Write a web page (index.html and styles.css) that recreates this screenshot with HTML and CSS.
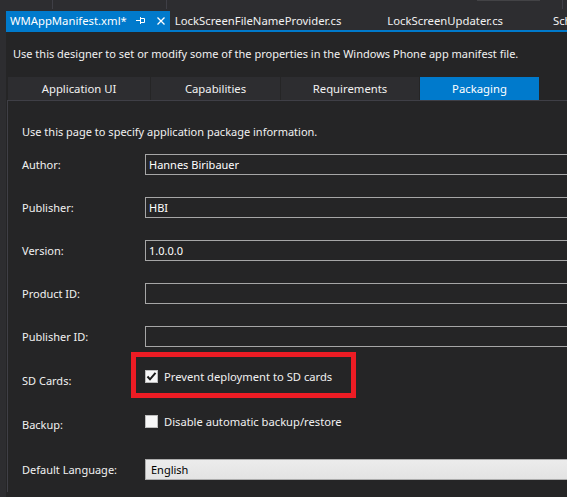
FILE: index.html
```html
<!DOCTYPE html>
<html lang="en">
<head>
    <meta charset="UTF-8">
    <meta name="viewport" content="width=device-width, initial-scale=1.0">
    <title>WMAppManifest.xml</title>
    <link rel="stylesheet" href="styles.css">
</head>
<body>
    <div class="toolbar">
        <span class="tb-sep first"></span>
        <span class="tb-sep second"></span>
        <span class="tb-box"></span>
        <span class="tb-sep last"></span>
    </div>

    <div class="doc-tabs">
        <div class="doc-tab active">
            <span class="doc-title">WMAppManifest.xml*</span>
            <svg class="pin" width="9" height="8" viewBox="0 0 9 8">
                <path d="M0 3.5H4.5M4.5 0V7M4.5 1.5H8.5V5.5H4.5" fill="none" stroke="#fff" stroke-width="1"/>
            </svg>
            <svg class="close" width="8" height="8" viewBox="0 0 8 8">
                <path d="M0.5 0.5L7.5 7.5M7.5 0.5L0.5 7.5" fill="none" stroke="#fff" stroke-width="1.3"/>
            </svg>
        </div>
        <div class="doc-tab">
            <span class="doc-title">LockScreenFileNameProvider.cs</span>
            <span class="tab-space"></span>
        </div>
        <div class="doc-tab">
            <span class="doc-title">LockScreenUpdater.cs</span>
            <span class="tab-space wide"></span>
        </div>
        <div class="doc-tab">
            <span class="doc-title">Sch</span>
        </div>
    </div>

    <div class="editor">
        <p class="intro">Use this designer to set or modify some of the properties in the Windows Phone app manifest file.</p>

        <div class="designer">
            <div class="designer-tabs">
                <div class="designer-tab app-ui">Application UI</div>
                <div class="designer-tab caps">Capabilities</div>
                <div class="designer-tab reqs">Requirements</div>
                <div class="designer-tab packaging selected">Packaging</div>
            </div>

            <div class="panel">
                <p class="panel-intro">Use this page to specify application package information.</p>

                <div class="field-row">
                    <label>Author:</label>
                    <div class="textbox">Hannes Biribauer</div>
                </div>
                <div class="field-row">
                    <label>Publisher:</label>
                    <div class="textbox">HBI</div>
                </div>
                <div class="field-row">
                    <label>Version:</label>
                    <div class="textbox">1.0.0.0</div>
                </div>
                <div class="field-row">
                    <label>Product ID:</label>
                    <div class="textbox"></div>
                </div>
                <div class="field-row">
                    <label>Publisher ID:</label>
                    <div class="textbox"></div>
                </div>
                <div class="field-row check-row sd-row">
                    <label>SD Cards:</label>
                    <div class="check-field">
                        <span class="checkbox">
                            <svg width="11" height="11" viewBox="0 0 11 11">
                                <path d="M1.5 5.5L4 8.3L9.5 1.8" fill="none" stroke="#1b1b1b" stroke-width="2"/>
                            </svg>
                        </span>
                        <span>Prevent deployment to SD cards</span>
                    </div>
                    <div class="highlight"></div>
                </div>
                <div class="field-row check-row backup-row">
                    <label>Backup:</label>
                    <div class="check-field">
                        <span class="checkbox"></span>
                        <span>Disable automatic backup/restore</span>
                    </div>
                </div>
                <div class="field-row lang-row">
                    <label>Default Language:</label>
                    <div class="dropdown">English</div>
                </div>
            </div>
        </div>
    </div>
</body>
</html>
```

FILE: styles.css
```css
body {
    margin: 0;
    padding: 0;
    background-color: #2d2d30;
    color: #f1f1f1;
    font-family: "Noto Sans", "Open Sans", sans-serif;
    font-size: 11px;
    line-height: 16px;
    width: 567px;
    height: 497px;
    overflow: hidden;
}

/* top toolbar remnants */
.toolbar {
    height: 10px;
    position: relative;
}

.tb-sep {
    position: absolute;
    top: 0;
    width: 1px;
    height: 9px;
    background: #3f3f46;
}

.tb-sep.first { left: 52px; }
.tb-sep.second { left: 166px; }
.tb-sep.last { left: 562px; }

.tb-box {
    position: absolute;
    left: 477px;
    top: -2px;
    width: 63px;
    height: 3px;
    border: 1px solid #434346;
    box-sizing: border-box;
}

/* document tabs */
.doc-tabs {
    display: flex;
    margin-left: 6px;
    height: 19px;
    padding-top: 1px;
    border-bottom: 2px solid #007acc;
    white-space: nowrap;
    overflow: hidden;
    font-size: 11.3px;
}

.doc-tab {
    display: flex;
    align-items: center;
    padding: 0 5px;
    color: #f1f1f1;
}

.doc-tab.active {
    background: #007acc;
    color: #fff;
    padding-left: 4px;
    padding-right: 5px;
}

.doc-title {
    line-height: 19px;
}

.pin {
    margin-left: 9px;
    margin-top: 1px;
}

.close {
    margin-left: 12px;
    margin-top: 1px;
}

.tab-space {
    display: inline-block;
    width: 36px;
}

.tab-space.wide {
    width: 40px;
}

/* editor */
.editor {
    margin-left: 6px;
    background: #252526;
    height: 465px;
    overflow: hidden;
}

.intro {
    margin: 0;
    padding: 14px 0 0 7px;
    white-space: nowrap;
}

.designer {
    margin: 15px 0 0 1px;
}

.designer-tabs {
    display: flex;
    height: 23px;
    padding-left: 1px;
    gap: 1px;
    font-size: 11.3px;
}

.designer-tab {
    background: #2d2d30;
    display: flex;
    align-items: center;
    justify-content: center;
    color: #f1f1f1;
}

.designer-tab.app-ui { width: 142px; }
.designer-tab.caps { width: 129px; }
.designer-tab.reqs { width: 138px; }
.designer-tab.packaging { width: 119px; }

.designer-tab.selected {
    background: #007acc;
    color: #fff;
}

.panel {
    border-top: 1px solid #3f3f46;
    border-left: 1px solid #3f3f46;
    padding: 23px 0 0 14px;
}

.panel-intro {
    margin: 0 0 3px 0;
    white-space: nowrap;
}

.field-row {
    display: grid;
    grid-template-columns: 123px 1fr;
    align-items: center;
    height: 43px;
    position: relative;
}

.field-row label {
    white-space: nowrap;
}

.textbox {
    height: 21px;
    box-sizing: border-box;
    border: 1px solid #a6a6a6;
    border-right: none;
    padding: 1px 3px;
    line-height: 17px;
    color: #fff;
}

.check-row {
    height: 45px;
}

.backup-row {
    height: 44px;
}

.lang-row {
    height: 45px;
}

.check-field {
    align-self: start;
    margin-top: 12px;
    display: flex;
    align-items: center;
    gap: 6px;
    line-height: 13px;
    white-space: nowrap;
    font-size: 11.2px;
}

.checkbox {
    width: 13px;
    height: 13px;
    box-sizing: border-box;
    background: #f7f7f7;
    border: 1px solid #bdbdbd;
    display: flex;
    align-items: center;
    justify-content: center;
}

.highlight {
    position: absolute;
    left: 109px;
    top: -6px;
    width: 225px;
    height: 46px;
    box-sizing: border-box;
    border: 5px solid #ed1c24;
}

.dropdown {
    height: 21px;
    box-sizing: border-box;
    border: 1px solid #acacac;
    border-right: none;
    background: linear-gradient(#ececec, #e3e3e3);
    color: #000;
    padding: 1px 5px;
    line-height: 17px;
}
```
